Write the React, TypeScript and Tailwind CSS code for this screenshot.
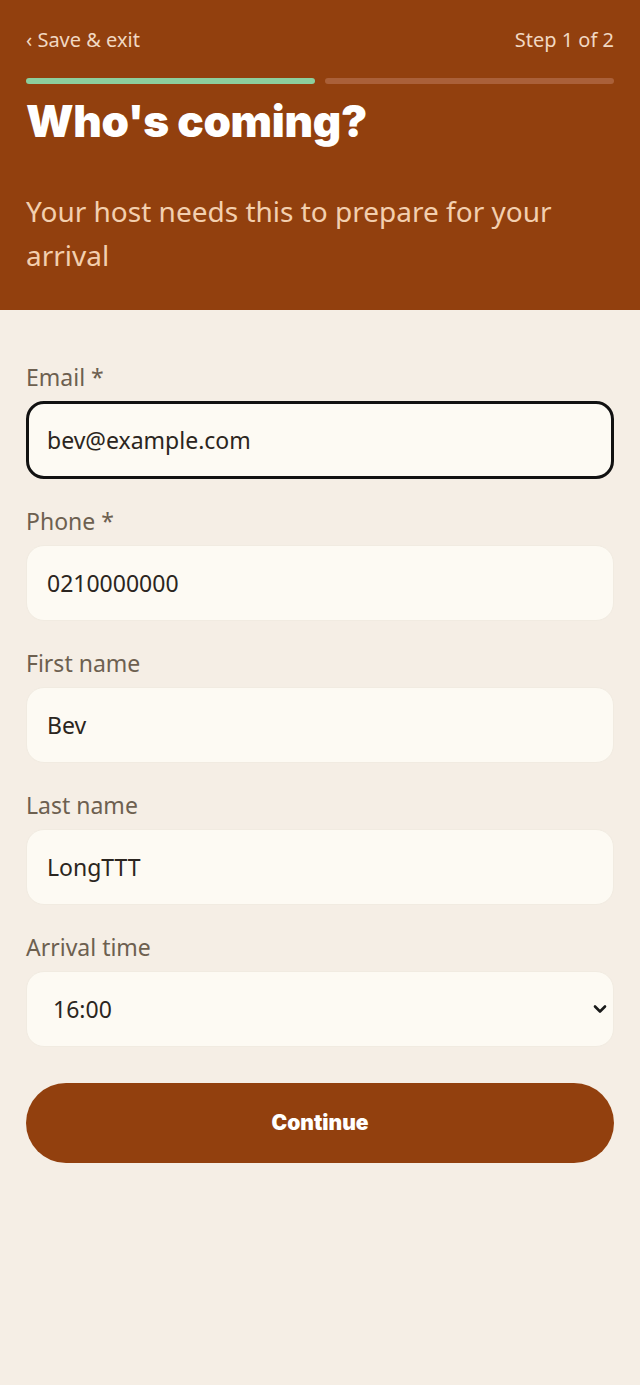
import React, { useState } from 'react';

const bodyFont = 'font-["Noto_Sans","Open_Sans",sans-serif]';
const heavyFont = 'font-["Inter","Lato",sans-serif]';

interface FieldProps {
    label: string;
    value: string;
    focused?: boolean;
    onChange: (v: string) => void;
}

const Field: React.FC<FieldProps> = ({ label, value, focused, onChange }) => (
    <label className="flex flex-col gap-[6px]">
        <span className="text-[23px] leading-[36px] text-[#6d6050]">{label}</span>
        <input
            value={value}
            onChange={(e) => onChange(e.target.value)}
            className={
                focused
                    ? 'h-[78px] rounded-[18px] border-[3px] border-[#111] bg-[#fdfaf3] px-[18px] text-[23px] text-[#2b2520] outline-none'
                    : 'h-[76px] rounded-[18px] border border-[#f1ebe1] bg-[#fdfaf3] px-[20px] text-[23px] text-[#2b2520] outline-none'
            }
        />
    </label>
);

export default function App() {
    const [email, setEmail] = useState('bev@example.com');
    const [phone, setPhone] = useState('0210000000');
    const [first, setFirst] = useState('Bev');
    const [last, setLast] = useState('LongTTT');
    const [time, setTime] = useState('16:00');

    return (
        <div className={`min-h-[1385px] w-[640px] bg-[#f5eee5] ${bodyFont}`}>
            {/* Header */}
            <div className="h-[310px] bg-[#92400e] px-[26px] pt-[24px]">
                <div className="flex items-center justify-between text-[20px] leading-[32px] text-[#f1d8c2]">
                    <span>‹ Save &amp; exit</span>
                    <span>Step 1 of 2</span>
                </div>
                <div className="mt-[22px] flex gap-[10px]">
                    <div className="h-[6px] flex-1 rounded-full bg-[#8ccf9d]" />
                    <div className="h-[6px] flex-1 rounded-full bg-[#aa6039]" />
                </div>
                <h1 className={`mt-[9px] text-[44px] leading-[56px] font-black tracking-[-0.3px] text-white ${heavyFont}`}>
                    Who's coming?
                </h1>
                <p className="mt-[40px] text-[28px] leading-[44px] text-[#f3cfae]">
                    Your host needs this to prepare for your arrival
                </p>
            </div>

            {/* Form */}
            <div className="flex flex-col gap-[24px] px-[26px] pt-[49px]">
                <Field label="Email *" value={email} focused onChange={setEmail} />
                <Field label="Phone *" value={phone} onChange={setPhone} />
                <Field label="First name" value={first} onChange={setFirst} />
                <Field label="Last name" value={last} onChange={setLast} />
                <label className="flex flex-col gap-[6px]">
                    <span className="text-[23px] leading-[36px] text-[#6d6050]">Arrival time</span>
                    <div className="relative">
                        <select
                            value={time}
                            onChange={(e) => setTime(e.target.value)}
                            className="h-[76px] w-full appearance-none rounded-[18px] border border-[#f1ebe1] bg-[#fdfaf3] px-[26px] text-[23px] text-[#2b2520] outline-none"
                        >
                            <option>15:00</option>
                            <option>16:00</option>
                            <option>17:00</option>
                        </select>
                        <svg
                            viewBox="0 0 16 16"
                            className="pointer-events-none absolute right-[6px] top-1/2 h-[16px] w-[16px] -translate-y-1/2"
                        >
                            <path d="M3 5.5 L8 10.5 L13 5.5" fill="none" stroke="#1a1a1a" strokeWidth="2.6" strokeLinecap="round" strokeLinejoin="round" />
                        </svg>
                    </div>
                </label>

                <button className={`mt-[12px] h-[80px] rounded-full bg-[#92400e] text-[21px] font-black text-white ${heavyFont}`}>
                    Continue
                </button>
            </div>
        </div>
    );
}
